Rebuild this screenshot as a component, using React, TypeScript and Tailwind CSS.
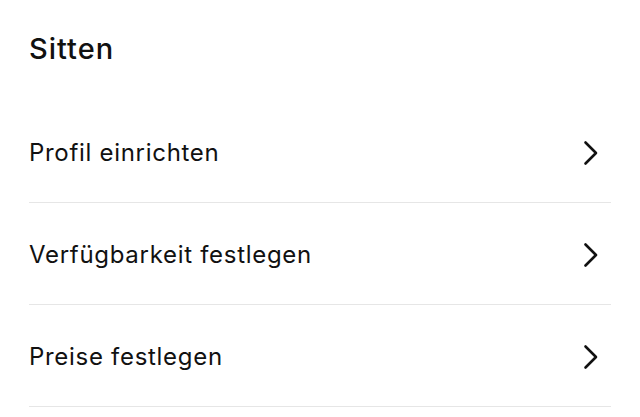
import React from "react";

const items = ["Profil einrichten", "Verfügbarkeit festlegen", "Preise festlegen"];

function Chevron() {
  return (
    <svg width="16" height="26" viewBox="0 0 16 26" fill="none" className="shrink-0">
      <path d="M2.5 2.5 L13 13 L2.5 23.5" stroke="#111" strokeWidth="2.6" strokeLinecap="round" strokeLinejoin="round" />
    </svg>
  );
}

export default function App() {
  return (
    <div className="w-[640px] h-[417px] bg-white overflow-hidden" style={{ fontFamily: "Inter, 'Noto Sans', sans-serif" }}>
      <div className="pl-[29px] pr-[29px]">
        <h1 className="text-[29px] font-medium tracking-[1px] text-[#111] leading-none pt-[34px] pb-[38px]">Sitten</h1>
        {items.map((t) => (
          <div key={t} className="flex items-center justify-between h-[102px] border-b border-[#e6e6e6] pt-[2px]">
            <span className="text-[24px] tracking-[0.7px] text-[#111] leading-none">{t}</span>
            <div className="pr-[12px]"><Chevron /></div>
          </div>
        ))}
      </div>
    </div>
  );
}
